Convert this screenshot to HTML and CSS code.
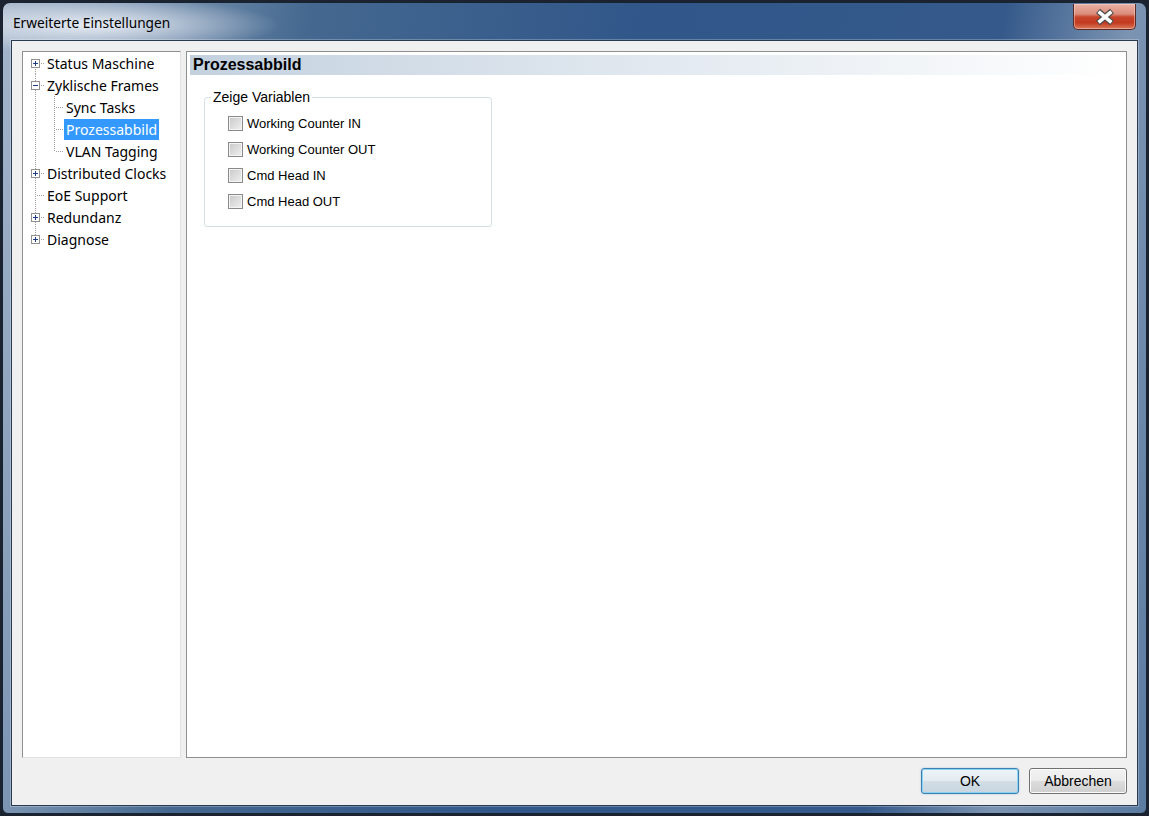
FILE: index.html
```html
<!DOCTYPE html>
<html lang="de">
<head>
    <meta charset="UTF-8">
    <title>Erweiterte Einstellungen</title>
    <link rel="stylesheet" href="styles.css">
</head>
<body>
    <div class="window">
        <div class="titlebar">
            <span class="title">Erweiterte Einstellungen</span>
            <button class="close">
                <svg width="22" height="16" viewBox="0 0 22 16">
                    <path d="M4 2 L18 14 M18 2 L4 14" stroke="#4a4a4a" stroke-width="6"/>
                    <path d="M4.6 2.6 L17.4 13.4 M17.4 2.6 L4.6 13.4" stroke="#fff" stroke-width="3.6"/>
                </svg>
            </button>
        </div>
        <div class="client">
            <div class="panels">
                <div class="tree">
                    <div class="row"><span class="cell first"><svg class="exp" width="9" height="9"><rect x="0.5" y="0.5" width="8" height="8" fill="#fff" stroke="#919191"/><path d="M2 4.5h5M4.5 2v5" stroke="#1e3f86"/></svg></span><span class="label">Status Maschine</span></div>
                    <div class="row"><span class="cell mid"><svg class="exp" width="9" height="9"><rect x="0.5" y="0.5" width="8" height="8" fill="#fff" stroke="#919191"/><path d="M2 4.5h5" stroke="#1e3f86"/></svg></span><span class="label">Zyklische Frames</span></div>
                    <div class="row"><span class="cell pass"></span><span class="cell mid"></span><span class="label">Sync Tasks</span></div>
                    <div class="row"><span class="cell pass"></span><span class="cell mid"></span><span class="label selected">Prozessabbild</span></div>
                    <div class="row"><span class="cell pass"></span><span class="cell last"></span><span class="label">VLAN Tagging</span></div>
                    <div class="row"><span class="cell mid"><svg class="exp" width="9" height="9"><rect x="0.5" y="0.5" width="8" height="8" fill="#fff" stroke="#919191"/><path d="M2 4.5h5M4.5 2v5" stroke="#1e3f86"/></svg></span><span class="label">Distributed Clocks</span></div>
                    <div class="row"><span class="cell mid"></span><span class="label">EoE Support</span></div>
                    <div class="row"><span class="cell mid"><svg class="exp" width="9" height="9"><rect x="0.5" y="0.5" width="8" height="8" fill="#fff" stroke="#919191"/><path d="M2 4.5h5M4.5 2v5" stroke="#1e3f86"/></svg></span><span class="label">Redundanz</span></div>
                    <div class="row"><span class="cell last"><svg class="exp" width="9" height="9"><rect x="0.5" y="0.5" width="8" height="8" fill="#fff" stroke="#919191"/><path d="M2 4.5h5M4.5 2v5" stroke="#1e3f86"/></svg></span><span class="label">Diagnose</span></div>
                </div>
                <div class="page">
                    <div class="page-head">Prozessabbild</div>
                    <fieldset class="group">
                        <legend>Zeige Variablen</legend>
                        <div class="checks">
                            <label class="check"><span class="box"></span>Working Counter IN</label>
                            <label class="check"><span class="box"></span>Working Counter OUT</label>
                            <label class="check"><span class="box"></span>Cmd Head IN</label>
                            <label class="check"><span class="box"></span>Cmd Head OUT</label>
                        </div>
                    </fieldset>
                </div>
            </div>
            <div class="buttons">
                <button class="btn default">OK</button>
                <button class="btn">Abbrechen</button>
            </div>
        </div>
    </div>
</body>
</html>
```

FILE: styles.css
```css
* {
    margin: 0;
    padding: 0;
    box-sizing: border-box;
}

body {
    background: #1b2230;
    width: 1149px;
    height: 816px;
    overflow: hidden;
    font-family: "Noto Sans", sans-serif;
}

.window {
    margin: 2px 2px 0 2px;
    width: 1145px;
    height: 812px;
    border: 1px solid #19222f;
    border-radius: 8px 8px 6px 6px;
    display: flex;
    flex-direction: column;
    background:
        radial-gradient(ellipse 190px 28px at 88px 22px, rgba(236, 240, 246, 0.95), rgba(236, 240, 246, 0) 100%),
        linear-gradient(100deg, #a4b5ca 0, #8199b6 10%, #44688f 24%, #31578a 50%, #34598a 78%, #7c94b2 88%, #5b7ba1 100%);
}

/* barra de titulo */
.titlebar {
    height: 37px;
    display: flex;
    justify-content: space-between;
    align-items: flex-start;
    padding-left: 10px;
}

.title {
    padding-top: 10px;
    line-height: 20px;
    font-size: 13.7px;
    color: #000;
}

.close {
    margin-top: 1px;
    margin-right: 10px;
    width: 63px;
    height: 26px;
    border: 1px solid #5a2a24;
    border-top: none;
    border-radius: 0 0 5px 5px;
    background: linear-gradient(#e9b0a3 0, #dc8d7c 40%, #c7452b 52%, #c23a1f 75%, #db7b5c 100%);
    box-shadow: inset 0 0 0 1px rgba(255, 220, 210, 0.45);
    display: flex;
    justify-content: center;
    align-items: center;
}

/* area de cliente */
.client {
    margin: 0 8px;
    height: 766px;
    border: 1px solid #2a3a50;
    box-shadow: 0 0 0 1px rgba(255, 255, 255, 0.25);
    background: #f0f0f0;
    padding: 10px 10px 11px 10px;
    display: flex;
    flex-direction: column;
}

.panels {
    height: 707px;
    display: flex;
    gap: 5px;
}

.tree {
    width: 159px;
    background: #fff;
    border: 1px solid;
    border-color: #8f8f8f #e2e2e2 #e2e2e2 #8f8f8f;
    padding-left: 3px;
    font-size: 14px;
}

.row {
    display: flex;
    height: 22px;
}

.cell {
    position: relative;
    width: 19px;
    height: 22px;
    flex-shrink: 0;
}

.cell::before {
    content: "";
    position: absolute;
    left: 9px;
    top: 0;
    bottom: 0;
    width: 1px;
    background: linear-gradient(to bottom, #a0a0a0 50%, transparent 50%) 0 0 / 1px 2px repeat-y;
}

.cell::after {
    content: "";
    position: absolute;
    left: 10px;
    right: 0;
    top: 11px;
    height: 1px;
    background: linear-gradient(to right, transparent 50%, #a0a0a0 50%) 0 0 / 2px 1px repeat-x;
}

.cell.first::before { top: 11px; }
.cell.last::before { bottom: 11px; }
.cell.pass::after { display: none; }

.exp {
    position: absolute;
    left: 5px;
    top: 7px;
    z-index: 1;
    display: block;
}

.label {
    margin-top: 1px;
    height: 21px;
    line-height: 21px;
    padding: 0 2px;
    white-space: nowrap;
    color: #000;
}

.label.selected {
    background: #3399ff;
    color: #fff;
}

/* pagina derecha */
.page {
    flex: 1;
    background: #fff;
    border: 1px solid #8e8f8f;
    padding: 3px;
}

.page-head {
    height: 20px;
    line-height: 20px;
    padding-left: 3px;
    font-family: "Liberation Sans", Arial, sans-serif;
    font-weight: bold;
    font-size: 16px;
    background: linear-gradient(90deg, #c3d1df 0%, #d9e2eb 35%, #ffffff 100%);
}

.group {
    margin: 14px 0 0 14px;
    width: 288px;
    border: 1px solid #d5dfe5;
    border-radius: 3px;
    padding: 0 0 12px 6px;
    font-family: "Liberation Sans", Arial, sans-serif;
    font-size: 13px;
}

.group legend {
    padding: 0 2px;
    line-height: 16px;
    font-size: 14px;
}

.checks {
    padding-top: 5px;
    margin-left: 17px;
}

.check {
    display: flex;
    align-items: center;
    height: 26px;
    gap: 4px;
}

.box {
    width: 15px;
    height: 15px;
    border: 1px solid #8a8a8a;
    background: linear-gradient(135deg, #c8c8c8 0, #f0f0f0 100%);
    box-shadow: inset 0 0 0 1px #f4f4f4;
}

/* botones */
.buttons {
    margin-top: 10px;
    display: flex;
    justify-content: flex-end;
    gap: 10px;
}

.btn {
    width: 98px;
    height: 26px;
    border: 1px solid #707070;
    border-radius: 3px;
    background: linear-gradient(#f2f2f2 0, #ebebeb 50%, #dddddd 50%, #cfcfcf 100%);
    box-shadow: inset 0 0 0 1px #fcfcfc;
    font-family: "Liberation Sans", Arial, sans-serif;
    font-size: 14px;
    color: #000;
}

.btn.default {
    border-color: #3c7fb1;
    background: linear-gradient(#eef4f8 0, #e3ebf1 50%, #d3dee6 50%, #c8d5df 100%);
    box-shadow: inset 0 0 0 1px #8ad3f2, 0 0 2px rgba(60, 127, 177, 0.4);
}
```
